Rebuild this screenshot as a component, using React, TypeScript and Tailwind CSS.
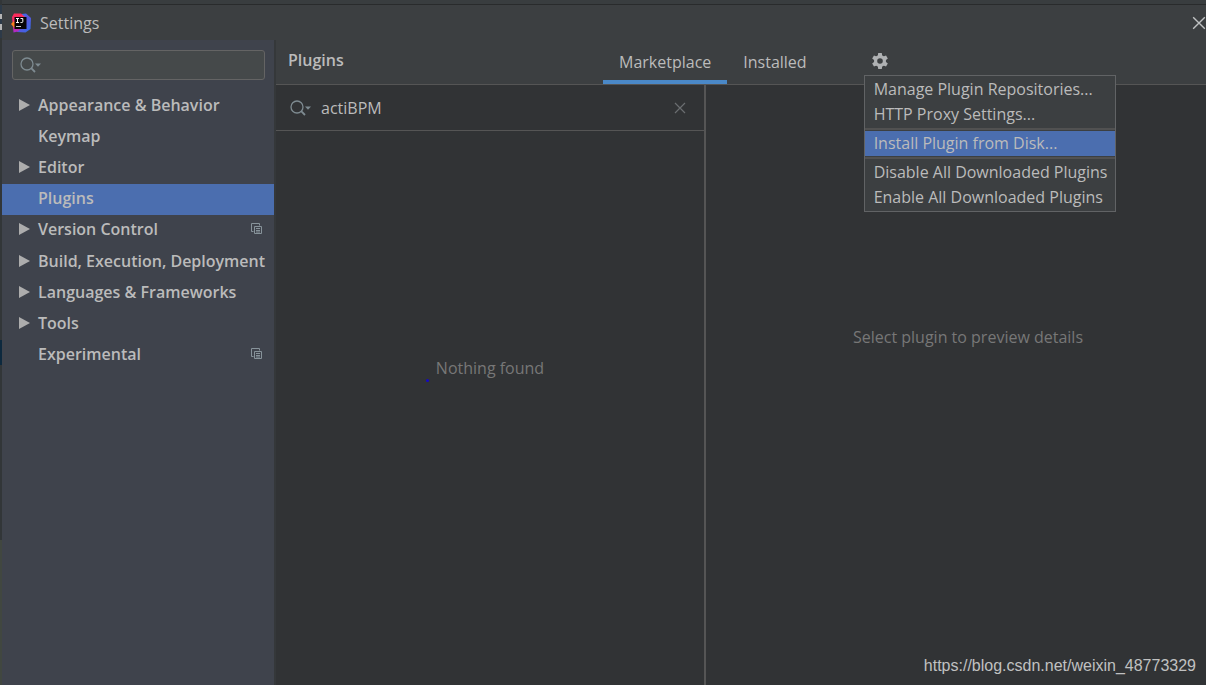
import { useState } from "react";

type Section = { label: string; expandable?: boolean; perProject?: boolean };

const sections: Section[] = [
  { label: "Appearance & Behavior", expandable: true },
  { label: "Keymap" },
  { label: "Editor", expandable: true },
  { label: "Plugins" },
  { label: "Version Control", expandable: true, perProject: true },
  { label: "Build, Execution, Deployment", expandable: true },
  { label: "Languages & Frameworks", expandable: true },
  { label: "Tools", expandable: true },
  { label: "Experimental", perProject: true },
];

const menuGroups = [
  ["Manage Plugin Repositories...", "HTTP Proxy Settings..."],
  ["Install Plugin from Disk..."],
  ["Disable All Downloaded Plugins", "Enable All Downloaded Plugins"],
];

function Logo() {
  return (
    <svg width="20" height="20" viewBox="0 0 20 20" aria-hidden="true">
      <defs>
        <linearGradient id="blue" x1="0" y1="0" x2="1" y2="1">
          <stop offset="0" stopColor="#2f7df0" />
          <stop offset="0.5" stopColor="#5a55dc" />
          <stop offset="1" stopColor="#2f6fe8" />
        </linearGradient>
        <linearGradient id="pink" x1="0" y1="0" x2="0" y2="1">
          <stop offset="0" stopColor="#fe2a57" />
          <stop offset="0.5" stopColor="#f0306e" />
          <stop offset="1" stopColor="#a52ad0" />
        </linearGradient>
      </defs>
      <path d="M11 1 15 0.5 20 5 19.5 16 14.500 19.500 6 19 9 8z" fill="url(#blue)" />
      <path d="M1 4 3 0.5 10 0.500 14 4 11 14 7 18.500 2.500 19.500 2 14z" fill="url(#pink)" />
      <path d="M0 11 3 8 5 12 3.500 15z" fill="#fc801d" />
      <path d="M3.500 4h12v12h-12z" fill="#080508" />
      <path
        d="M5 5.500h3M6.500 5.500v4M5 9.500h3M9.500 5.500h2.300v3q0 1-1 1h-1.300"
        stroke="#fff"
        strokeWidth="1"
        fill="none"
      />
      <path d="M5 13.500h5" stroke="#ccc" strokeWidth="1" />
    </svg>
  );
}

function SearchIcon() {
  return (
    <svg className="shrink-0" width="22" height="16" viewBox="0 0 22 16" fill="none" aria-hidden="true">
      <circle cx="7" cy="7" r="6" stroke="#7e8b91" strokeWidth="1.300" />
      <path d="M11.200 11.200 15 15" stroke="#7e8b91" strokeWidth="1.800" />
      <path d="M15 6.500h6l-3 3.200z" fill="#7e8b91" />
    </svg>
  );
}

function ProjectIcon() {
  return (
    <svg className="shrink-0" width="12" height="12" viewBox="0 0 12 12" fill="none" stroke="#87939a" aria-hidden="true">
      <path d="M2.500 8.500h-2v-8h8v2" />
      <path d="M3.500 3.500h7v7h-7zM5 5.500h4M5 7.500h4M5 9h4" />
    </svg>
  );
}

function GearIcon() {
  return (
    <svg width="18" height="18" viewBox="0 0 18 18" aria-hidden="true">
      <g fill="#afb1b3">
        <path
          fillRule="evenodd"
          d="M9 3a6 6 0 1 0 0 12a6 6 0 0 0 0-12zm0 3.200a2.800 2.800 0 1 1 0 5.600a2.800 2.800 0 0 1 0-5.600z"
        />
        <path d="M7.200 1h3.600l.5 3.500H6.700zM6.700 13.500h4.600L10.800 17H7.200z" />
        <path d="M7.200 1h3.600l.5 3.500H6.700zM6.700 13.500h4.600L10.800 17H7.200z" transform="rotate(60 9 9)" />
        <path d="M7.200 1h3.600l.5 3.500H6.700zM6.700 13.500h4.600L10.800 17H7.200z" transform="rotate(120 9 9)" />
      </g>
    </svg>
  );
}

function Cross({ size, color }: { size: number; color: string }) {
  return (
    <svg className="shrink-0" width={size} height={size} viewBox="0 0 12 12" fill="none" aria-hidden="true">
      <path d="M1 1 11 11M11 1 1 11" stroke={color} strokeWidth="1.200" />
    </svg>
  );
}

/* Sliver of the editor window that shows behind the dialog. */
function EditorEdge() {
  return (
    <div className="flex w-0.5 shrink-0 flex-col bg-[#323638]" aria-hidden="true">
      <div className="mt-[5px] h-[9px] bg-[#2d3a48]" />
      <div className="h-[5px] bg-[#b5b5b5]" />
      <div className="h-[5px] bg-[#2d3a48]" />
      <div className="h-[6px] bg-[#b5b5b5]" />
      <div className="h-[8px] bg-[#2d3a48]" />
      <div className="mt-[302px] h-[25px] bg-[#0d293e]" />
      <div className="mt-[175px] flex-1 bg-[#414740]" />
    </div>
  );
}

export default function App() {
  const [selected, setSelected] = useState("Plugins");
  const [tab, setTab] = useState("Marketplace");
  const [query, setQuery] = useState("actiBPM");
  const [menuOpen, setMenuOpen] = useState(true);

  return (
    <div className="flex min-h-screen overflow-hidden bg-[#3c3f41] font-['Open_Sans','Noto_Sans',sans-serif] text-[16px] leading-6 text-[#bbbbbb]">
      <EditorEdge />
      <div className="flex min-w-0 flex-1 flex-col">
        <div className="h-[5px] border-b border-[#292b2c] bg-[#393d3f]" />
        <header className="flex h-[35px] items-center pl-[9px]">
          <Logo />
          <h1 className="ml-[9px] flex-1 text-[16px]">Settings</h1>
          <button aria-label="Close" className="-mr-1 p-1">
            <Cross size={14} color="#bfc1c2" />
          </button>
        </header>

        <div className="flex flex-1">
          <aside className="w-[274px] shrink-0 border-r-2 border-[#35383a] bg-[#3f434c]">
            <label className="my-[10px] mr-[9px] ml-[10px] flex h-[30px] items-center rounded-[3px] border border-[#646464] bg-[#45494a] px-[7px]">
              <SearchIcon />
              <input aria-label="Search settings" className="w-full min-w-0 bg-transparent px-1 outline-none" />
            </label>
            <nav className="grid h-[281px] auto-rows-fr grid-cols-1">
              {sections.map((s) => (
                <button
                  key={s.label}
                  onClick={() => setSelected(s.label)}
                  className={`flex items-center pr-[11px] pb-0.5 pl-[17px] text-left font-semibold ${
                    selected === s.label ? "bg-[#4b6eaf]" : ""
                  }`}
                >
                  <svg className="mr-2 shrink-0" width="11" height="12" viewBox="0 0 11 12" aria-hidden="true">
                    {s.expandable && <path d="M0 0 11 6 0 12z" fill="#adadad" />}
                  </svg>
                  <span className="min-w-0 flex-1 whitespace-nowrap">{s.label}</span>
                  {s.perProject && <ProjectIcon />}
                </button>
              ))}
            </nav>
          </aside>

          <main className="flex min-w-0 flex-1 flex-col bg-[#313335]">
            <div className="flex h-[45px] border-b border-[#555555] bg-[#3c3f41]">
              <h2 className="w-[327px] pt-2 pl-3 font-semibold">Plugins</h2>
              <div role="tablist" className="flex">
                {["Marketplace", "Installed"].map((name) => (
                  <button
                    key={name}
                    role="tab"
                    aria-selected={tab === name}
                    onClick={() => setTab(name)}
                    className={`border-b-4 px-4 pt-1 ${tab === name ? "border-[#4a88c7]" : "border-transparent"}`}
                  >
                    {name}
                  </button>
                ))}
              </div>
              <div className="relative ml-12 flex items-center pb-0.5">
                <button aria-label="Plugin options" aria-expanded={menuOpen} onClick={() => setMenuOpen(!menuOpen)}>
                  <GearIcon />
                </button>
                {menuOpen && (
                  <div
                    role="menu"
                    className="absolute top-[35px] -left-[7px] w-[252px] border border-[#616365] bg-[#3c3f41] py-px"
                  >
                    {menuGroups.map((group, i) => (
                      <div key={group[0]} className={i > 0 ? "mt-px border-t-2 border-[#515151] pt-px" : ""}>
                        {group.map((item) => (
                          <button
                            key={item}
                            role="menuitem"
                            className={`block h-[25px] w-full px-[9px] text-left leading-[25px] whitespace-nowrap ${
                              i === 1 ? "bg-[#4b6eaf]" : ""
                            }`}
                          >
                            {item}
                          </button>
                        ))}
                      </div>
                    ))}
                  </div>
                )}
              </div>
            </div>

            <div className="flex flex-1">
              <section className="flex w-[430px] shrink-0 flex-col border-r-2 border-[#555555]">
                <label className="flex h-[46px] items-center border-b border-[#555555] pr-[18px] pl-[14px]">
                  <SearchIcon />
                  <input
                    aria-label="Search plugins"
                    value={query}
                    onChange={(e) => setQuery(e.target.value)}
                    className="min-w-0 flex-1 bg-transparent px-[9px] outline-none"
                  />
                  <button aria-label="Clear search" onClick={() => setQuery("")}>
                    <Cross size={12} color="#6a6e70" />
                  </button>
                </label>
                <p className="flex flex-1 items-center justify-center pb-20 text-[#777777]">
                  <span className="relative">
                    Nothing found
                    <i className="absolute top-[23px] -left-[10px] size-[3px] rounded-full bg-[#1408c8]" />
                  </span>
                </p>
              </section>
              <section className="relative flex flex-1 items-center justify-center pb-24 pl-6 text-[#777777]">
                <p>Select plugin to preview details</p>
                <a
                  href="https://blog.csdn.net/weixin_48773329"
                  className="absolute right-[10px] bottom-[7px] font-['Liberation_Sans',sans-serif] text-[16px] text-[#c0c1c1]"
                >
                  https://blog.csdn.net/weixin_48773329
                </a>
              </section>
            </div>
          </main>
        </div>
      </div>
    </div>
  );
}
